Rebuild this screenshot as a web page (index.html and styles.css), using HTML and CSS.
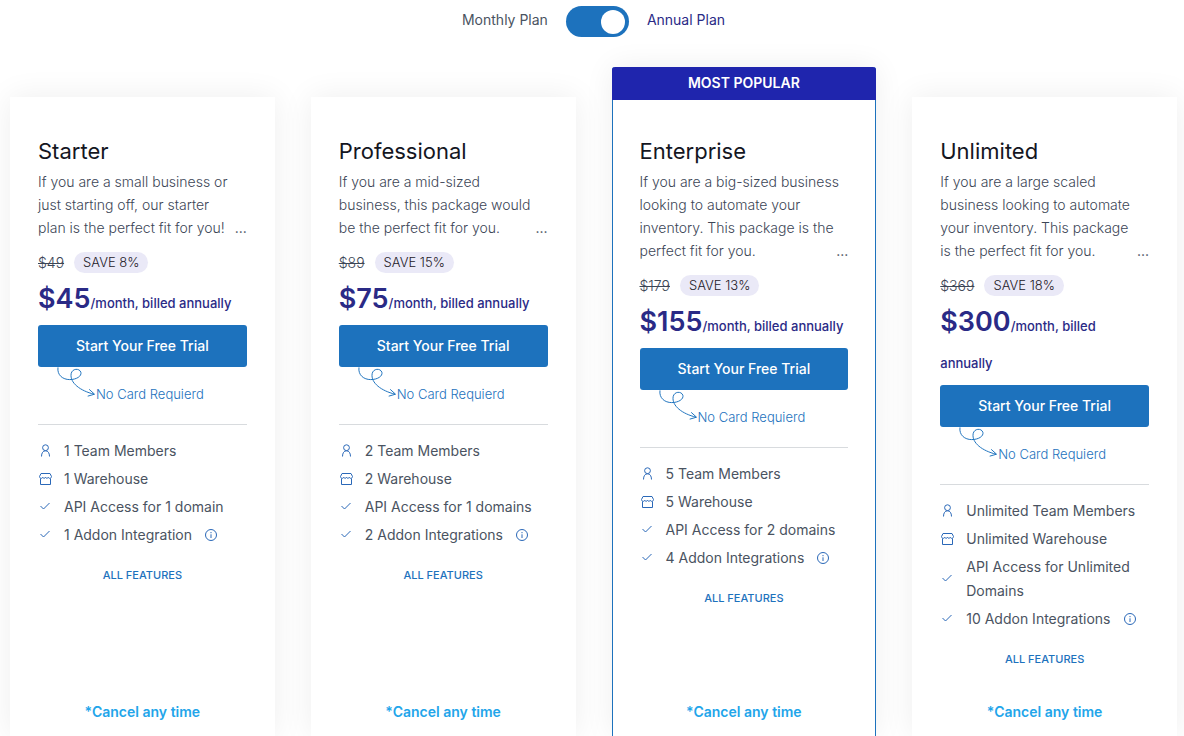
FILE: index.html
```
<!DOCTYPE html>
<html lang="en">
<head>
    <meta charset="utf-8">
    <meta name="viewport" content="width=device-width, initial-scale=1">
    <title>Pricing</title>
    <link rel="stylesheet" href="styles.css">
</head>

<body>
<!-- shared icons -->
<svg class="sprite" aria-hidden="true">
    <symbol id="user" viewBox="0 0 14 14">
        <circle cx="7.500" cy="3.700" r="2.900"/>
        <path d="M3.500 12.500C3.500 9 5 6.800 7.500 6.800S11.500 9 11.500 12.500"/>
    </symbol>
    <symbol id="store" viewBox="0 0 14 14">
        <path d="M3 1.500H12L13.500 4.500C13.500 6.800 10.600 6.800 10.300 5.300C9.800 6.600 8 6.600 7.500 5.300C7 6.600 5.200 6.600 4.700 5.300C4.400 6.800 1.500 6.800 1.500 4.500ZM2.500 6.500V12.500H12.500V6.500"/>
    </symbol>
    <symbol id="check" viewBox="0 0 14 14">
        <path d="M2.500 6L5.500 9L11.500 3"/>
    </symbol>
    <symbol id="info" viewBox="0 0 14 14">
        <circle cx="7" cy="7" r="5.500"/>
        <path d="M7 6.300V10M7 4V5.200"/>
    </symbol>
    <symbol id="arrow" viewBox="0 0 40 32">
        <path d="M1 0C0 8 6 12.500 13 12.500C20 12.500 25.500 9 24.500 5C23 0.500 15.500 1 14.500 6.500C13 16 24 24 38 27.500M33 22.500L38.500 27.500L31.500 29.500"/>
    </symbol>
</svg>

<main class="pricing">
    <div class="switch-row">
        <label for="billing">Monthly Plan</label>
        <input class="switch" type="checkbox" role="switch" id="billing" checked>
        <label class="active" for="billing">Annual Plan</label>
    </div>

    <div class="plans">
        <section class="plan">
            <h2>Starter</h2>
            <div class="about">
                <p>If you are a small business or just starting off, our starter plan is the perfect fit for you!</p>
                <span>...</span>
            </div>
            <div class="saving"><del>$49</del> <span class="badge">SAVE 8%</span></div>
            <div class="price"><strong>$45</strong>/month, billed <span>annually</span></div>
            <button class="trial" type="button">Start Your Free Trial</button>
            <div class="no-card"><svg><use href="#arrow"/></svg>No Card Requierd</div>
            <ul class="features">
                <li><svg class="icon"><use href="#user"/></svg>1 Team Members</li>
                <li><svg class="icon"><use href="#store"/></svg>1 Warehouse</li>
                <li><svg class="icon"><use href="#check"/></svg>API Access for 1 domain</li>
                <li><svg class="icon"><use href="#check"/></svg>1 Addon Integration <svg class="icon info"><use href="#info"/></svg></li>
            </ul>
            <a class="all" href="#">ALL FEATURES</a>
            <p class="cancel">*Cancel any time</p>
        </section>

        <section class="plan">
            <h2>Professional</h2>
            <div class="about">
                <p>If you are a mid-sized business, this package would be the perfect fit for you.</p>
                <span>...</span>
            </div>
            <div class="saving"><del>$89</del> <span class="badge">SAVE 15%</span></div>
            <div class="price"><strong>$75</strong>/month, billed <span>annually</span></div>
            <button class="trial" type="button">Start Your Free Trial</button>
            <div class="no-card"><svg><use href="#arrow"/></svg>No Card Requierd</div>
            <ul class="features">
                <li><svg class="icon"><use href="#user"/></svg>2 Team Members</li>
                <li><svg class="icon"><use href="#store"/></svg>2 Warehouse</li>
                <li><svg class="icon"><use href="#check"/></svg>API Access for 1 domains</li>
                <li><svg class="icon"><use href="#check"/></svg>2 Addon Integrations <svg class="icon info"><use href="#info"/></svg></li>
            </ul>
            <a class="all" href="#">ALL FEATURES</a>
            <p class="cancel">*Cancel any time</p>
        </section>

        <section class="plan popular">
            <div class="ribbon">MOST POPULAR</div>
            <h2>Enterprise</h2>
            <div class="about">
                <p>If you are a big-sized business looking to automate your inventory. This package is the perfect fit for you.</p>
                <span>...</span>
            </div>
            <div class="saving"><del>$179</del> <span class="badge">SAVE 13%</span></div>
            <div class="price"><strong>$155</strong>/month, billed <span>annually</span></div>
            <button class="trial" type="button">Start Your Free Trial</button>
            <div class="no-card"><svg><use href="#arrow"/></svg>No Card Requierd</div>
            <ul class="features">
                <li><svg class="icon"><use href="#user"/></svg>5 Team Members</li>
                <li><svg class="icon"><use href="#store"/></svg>5 Warehouse</li>
                <li><svg class="icon"><use href="#check"/></svg>API Access for 2 domains</li>
                <li><svg class="icon"><use href="#check"/></svg>4 Addon Integrations <svg class="icon info"><use href="#info"/></svg></li>
            </ul>
            <a class="all" href="#">ALL FEATURES</a>
            <p class="cancel">*Cancel any time</p>
        </section>

        <section class="plan">
            <h2>Unlimited</h2>
            <div class="about">
                <p>If you are a large scaled business looking to automate your inventory. This package is the perfect fit for you.</p>
                <span>...</span>
            </div>
            <div class="saving"><del>$369</del> <span class="badge">SAVE 18%</span></div>
            <div class="price"><strong>$300</strong>/month, billed <span>annually</span></div>
            <button class="trial" type="button">Start Your Free Trial</button>
            <div class="no-card"><svg><use href="#arrow"/></svg>No Card Requierd</div>
            <ul class="features">
                <li><svg class="icon"><use href="#user"/></svg>Unlimited Team Members</li>
                <li><svg class="icon"><use href="#store"/></svg>Unlimited Warehouse</li>
                <li><svg class="icon"><use href="#check"/></svg>API Access for Unlimited Domains</li>
                <li><svg class="icon"><use href="#check"/></svg>10 Addon Integrations <svg class="icon info"><use href="#info"/></svg></li>
            </ul>
            <a class="all" href="#">ALL FEATURES</a>
            <p class="cancel">*Cancel any time</p>
        </section>
    </div>
</main>
</body>
</html>
```
FILE: styles.css
```
* {
    box-sizing: border-box;
}

body {
    margin: 0;
    background: white;
    color: #4a5361;
    font-family: Inter, "Liberation Sans", sans-serif;
    font-size: 14px;
}

h2, p, ul {
    margin: 0;
    padding: 0;
}

svg {
    fill: none;
    stroke: #1d72bd;
    flex: none;
}

.sprite {
    display: none;
}

.pricing {
    min-height: 100vh;
    display: flex;
    flex-direction: column;
    padding: 6px 7px 0 10px;
    overflow: hidden;
}

/* monthly / annual switch */
.switch-row {
    display: flex;
    justify-content: center;
    align-items: center;
    gap: 18px;
    margin-bottom: 60px;
}

.switch-row label {
    line-height: 28px;
    padding-bottom: 3px;
}

.switch-row .active {
    color: #2a2a86;
}

.switch {
    appearance: none;
    display: flex;
    align-items: center;
    justify-content: flex-start;
    width: 63px;
    height: 31px;
    margin: 0;
    padding: 0 4px;
    border-radius: 16px;
    background: #1d72bd;
    cursor: pointer;
}

.switch::before {
    content: "";
    width: 24px;
    height: 24px;
    border-radius: 50%;
    background: white;
}

.switch:checked {
    justify-content: flex-end;
}

/* plans */
.plans {
    flex: 1;
    display: grid;
    grid-template-columns: repeat(4, minmax(0, 1fr));
    gap: 36px;
}

.plan {
    display: flex;
    flex-direction: column;
    padding: 40px 28px 12px;
    background: white;
    box-shadow: 0 0 30px rgba(0, 0, 0, 0.07);
}

.popular {
    margin-top: -30px;
    padding: 0 27px 12px;
    border: 1px solid #1d72bd;
    border-width: 0 1px;
    border-radius: 3px 3px 0 0;
}

.ribbon {
    margin: 0 -28px 37px;
    padding-bottom: 1px;
    border-radius: 3px 3px 0 0;
    background: #1f25ad;
    color: white;
    font-weight: 600;
    line-height: 32px;
    text-align: center;
}

h2 {
    color: #14161f;
    font-size: 22px;
    font-weight: 400;
    line-height: 28px;
    margin-bottom: 5px;
}

/* the dots share the last line of the text */
.about {
    display: grid;
    line-height: 23px;
    margin-bottom: 13px;
}

.about p,
.about span {
    grid-area: 1 / 1;
}

.about p {
    max-width: 200px;
    color: #3c4656;
    font-weight: 300;
}

.about span {
    align-self: end;
    justify-self: end;
}

.saving {
    display: flex;
    align-items: center;
    gap: 10px;
    color: #3c4656;
    font-weight: 300;
    line-height: 21px;
}

.badge {
    padding: 0 9px;
    border-radius: 11px;
    background: #eae9f7;
    color: #1e2028;
    font-size: 13px;
}

.price {
    color: #2a2a86;
    font-size: 13px;
    font-weight: 500;
    line-height: 37px;
    margin: 7px 0 3px;
}

.price strong {
    font-size: 27px;
    font-weight: 600;
}

.trial {
    height: 42px;
    padding: 0 0 2px;
    border: 0;
    border-radius: 3px;
    background: #1d72bd;
    color: white;
    font: 500 14px Inter, "Liberation Sans", sans-serif;
    cursor: pointer;
}

.no-card {
    display: flex;
    align-items: flex-end;
    height: 58px;
    padding: 0 0 20px 19px;
    border-bottom: 1px solid #d8dbde;
    color: #1d72bd;
    font-size: 13px;
    font-weight: 300;
    line-height: 20px;
}

.no-card svg {
    width: 39px;
    height: 32px;
    margin-bottom: 5px;
}

.features {
    list-style: none;
    padding-top: 14px;
}

.features li {
    display: flex;
    align-items: center;
    line-height: 24px;
    margin-bottom: 4px;
}

.icon {
    width: 14px;
    height: 14px;
    margin-right: 12px;
    stroke: #2a68b8;
}

.icon.info {
    margin: 0 0 0 12px;
}

.all {
    margin-top: 14px;
    color: #1d72bd;
    font-size: 11px;
    font-weight: 500;
    line-height: 20px;
    text-align: center;
    text-decoration: none;
}

.cancel {
    margin-top: auto;
    color: #22a5ea;
    font-weight: 600;
    line-height: 24px;
    text-align: center;
}
```
